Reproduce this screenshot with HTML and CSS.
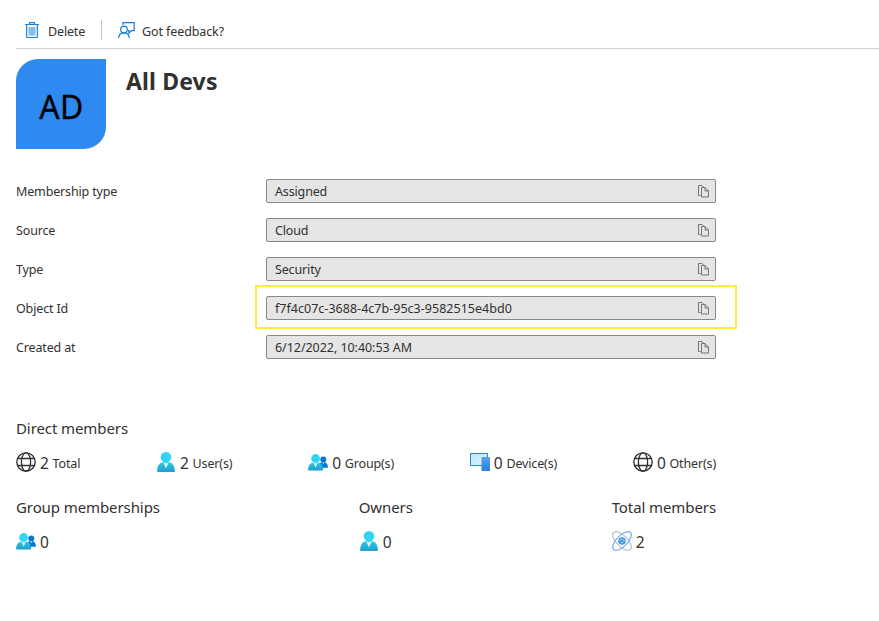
FILE: index.html
```html
<!DOCTYPE html>
<html lang="en">
<head>
<meta charset="utf-8">
<title>All Devs</title>
<link rel="stylesheet" href="styles.css">
</head>
<body>
<svg class="defs" width="0" height="0" aria-hidden="true">
  <defs>
    <linearGradient id="person-fill" x1="0" y1="0" x2="0" y2="1"><stop offset="0" stop-color="#2cc8eb"/><stop offset="1" stop-color="#1f9fc8"/></linearGradient>
    <linearGradient id="screen-fill" x1="0" y1="0" x2="1" y2="1"><stop offset="0" stop-color="#c3e5f8"/><stop offset="1" stop-color="#d8f3fc"/></linearGradient>
    <linearGradient id="phone-fill" x1="0" y1="0" x2="0" y2="1"><stop offset="0" stop-color="#5ea0ef"/><stop offset="1" stop-color="#2380dc"/></linearGradient>
    <symbol id="copy" viewBox="0 0 12 13">
      <path d="M3.5 10.5H1.500V.5H5L6.500 2M4.500 2.500H8L11.500 6V12H4.500ZM8 2.500V6H11.500" fill="none" stroke="#68676a" stroke-width=".9"/>
    </symbol>
    <symbol id="globe" viewBox="0 0 20 20">
      <g fill="none" stroke="#323130" stroke-width="1.35"><circle cx="10" cy="10" r="9.2"/><ellipse cx="10" cy="10" rx="4.6" ry="9.2"/><path d="M1.5 6.5H18.5M1.5 13.5H18.5"/></g>
    </symbol>
    <symbol id="person" viewBox="-1 0 20 20">
      <path d="M1.2 20Q0 20 0 18.8C.6 13.800 2.500 10.300 6.200 10.300H11.800C15.500 10.300 17.400 13.800 18 18.800Q18 20 16.800 20Z" fill="url(#person-fill)"/>
      <path d="M6.200 10.300L9 16.600L11.800 10.300Q9 12 6.200 10.300Z" fill="#fff" opacity=".85"/>
      <circle cx="9" cy="5.300" r="5.300" fill="#32d4f5"/>
    </symbol>
    <symbol id="group" viewBox="0 0 20 17">
      <circle cx="15.300" cy="5.500" r="3" fill="#0078d4"/>
      <path d="M11 13.700V10Q12 8.300 14 8.300H16.800Q19.300 8.800 20 12.900Q20 13.700 19.200 13.700Z" fill="#0078d4"/>
      <path d="M14.500 8.400L15.300 10.300L16.200 8.400Z" fill="#fff"/>
      <path d="M1 16.500Q0 16.500 0 15.500C.5 11.400 2.200 8.700 5.300 8.700H9.900C13 8.700 14.700 11.400 15.200 15.500Q15.200 16.500 14.200 16.500Z" fill="url(#person-fill)"/>
      <path d="M5.400 8.700L7.600 13.800L9.800 8.700Q7.600 10 5.400 8.700Z" fill="#fff" opacity=".85"/>
      <circle cx="7.600" cy="4.500" r="4.400" fill="#32d4f5"/>
    </symbol>
  </defs>
</svg>

<header class="toolbar">
  <div class="command delete">
    <svg width="14" height="17" viewBox="0 0 14 17"><path d="M3.500 5H10.500V13.500H3.500Z" fill="#83bdec"/><path d="M0 2.500H14M4.500 2.500V.6H9.500V2.500M1.700 2.500V15.500H12.300V2.500" fill="none" stroke="#1683d8" stroke-width="1.200"/></svg>
    <span>Delete</span>
  </div>
  <div class="command feedback">
    <svg width="17" height="17" viewBox="0 0 17 17"><g fill="none" stroke="#0f7fd7" stroke-width="1.200"><circle cx="6" cy="7.500" r="3.300"/><path d="M.6 16C.7 12.700 3 10.900 6 10.900S11 12.700 11.300 16M5 3V.7H16.200V8.700H13.500L11 11.200V8.700H10"/></g></svg>
    <span>Got feedback?</span>
  </div>
</header>

<main>
  <section class="identity">
    <div class="avatar"><span>AD</span></div>
    <h1>All Devs</h1>
  </section>

  <section class="properties">
    <div class="property"><span class="label">Membership type</span><div class="field"><span>Assigned</span><svg width="12" height="13"><use href="#copy"/></svg></div></div>
    <div class="property"><span class="label">Source</span><div class="field"><span>Cloud</span><svg width="12" height="13"><use href="#copy"/></svg></div></div>
    <div class="property"><span class="label">Type</span><div class="field"><span>Security</span><svg width="12" height="13"><use href="#copy"/></svg></div></div>
    <div class="property"><span class="label">Object Id</span><div class="field highlighted"><span class="numeric">f7f4c07c-3688-4c7b-95c3-9582515e4bd0</span><svg width="12" height="13"><use href="#copy"/></svg></div></div>
    <div class="property"><span class="label">Created at</span><div class="field"><span class="date">6/12/2022, 10:40:53 AM</span><svg width="12" height="13"><use href="#copy"/></svg></div></div>
  </section>

  <section class="members">
    <h2>Direct members</h2>
    <div class="stats">
      <div class="stat"><svg width="20" height="20"><use href="#globe"/></svg><b>2</b><span>Total</span></div>
      <div class="stat"><svg width="20" height="20"><use href="#person"/></svg><b>2</b><span>User(s)</span></div>
      <div class="stat"><svg width="20" height="17"><use href="#group"/></svg><b>0</b><span>Group(s)</span></div>
      <div class="stat"><svg width="20" height="18" viewBox="0 0 20 18"><path d="M.5.5H17.500V12.500H.5Z" fill="url(#screen-fill)" stroke="#2387cf"/><rect x="11.500" y="4" width="8.500" height="14" rx=".6" fill="url(#phone-fill)"/><circle cx="15.700" cy="16.300" r=".5" fill="#75b6f5"/></svg><b>0</b><span>Device(s)</span></div>
      <div class="stat"><svg width="20" height="20"><use href="#globe"/></svg><b>0</b><span>Other(s)</span></div>
    </div>
  </section>

  <section class="summary">
    <div class="card"><h2>Group memberships</h2><div class="stat"><svg width="20" height="17"><use href="#group"/></svg><b>0</b></div></div>
    <div class="card"><h2>Owners</h2><div class="stat"><svg width="20" height="20"><use href="#person"/></svg><b>0</b></div></div>
    <div class="card"><h2>Total members</h2><div class="stat"><svg width="20" height="20" viewBox="0 0 20 20"><g fill="none" stroke-width="1.100"><ellipse cx="10" cy="10" rx="12" ry="5.400" transform="rotate(45 10 10)" stroke="#b9bcc0"/><ellipse cx="10" cy="10" rx="12" ry="5.400" transform="rotate(-45 10 10)" stroke="#69aff2"/></g><circle cx="10" cy="10" r="3.800" fill="#3f94e4"/><path d="M7.500 9L10 8L12.500 10L10 12.200L8.500 11" fill="none" stroke="#d7ebfb" stroke-width=".7"/></svg><b>2</b></div></div>
  </section>
</main>
</body>
</html>
```
FILE: styles.css
```css
* { box-sizing: border-box; }

body {
  margin: 0;
  height: 621px;
  overflow: hidden;
  background: #fff;
  color: #323130;
  font: 12.5px/18px "Noto Sans", sans-serif;
  letter-spacing: -0.15px;
}

svg { display: block; flex: none; overflow: visible; }
.defs { position: absolute; }
h1, h2 { margin: 0; }
span, b, h1, h2 { white-space: nowrap; }

.toolbar {
  display: flex;
  height: 49px;
  margin-left: 16px;
  padding: 20px 0 0;
  border-bottom: 1px solid #d2d0ce;
}

.command { display: flex; height: 20px; align-items: center; }
.command svg { margin-top: 1px; }
.command span { padding-top: 3px; }
.delete { width: 86px; padding-left: 9px; gap: 9px; border-right: 1px solid #c8c6c4; }
.feedback { padding-left: 16px; gap: 7px; letter-spacing: -0.1px; }

.identity { display: flex; padding: 10px 16px 0; gap: 20px; }

.avatar {
  display: flex;
  width: 90px;
  height: 90px;
  align-items: center;
  justify-content: center;
  border-radius: 22px 0;
  background: #2e89f1;
  color: #000;
  font-size: 32px;
  line-height: 40px;
  letter-spacing: 0.4px;
  -webkit-text-stroke: 0.3px #000;
}

.avatar span { padding: 5px 0 0 1px; }
h1 { padding-top: 6px; font-size: 23px; line-height: 32px; font-weight: 700; letter-spacing: 0.15px; }

.properties { display: grid; gap: 15px; padding: 30px 16px 0; }
.property { display: grid; grid-template-columns: 250px 450px; height: 24px; align-items: center; }
.property span { padding-top: 2px; }
.numeric { letter-spacing: 0.02px; }
.date { letter-spacing: -0.05px; }

.field {
  position: relative;
  display: flex;
  height: 24px;
  align-items: center;
  justify-content: space-between;
  padding: 0 6px 0 8px;
  border: 1px solid #8a8886;
  border-radius: 2px;
  background: #e5e5e5;
}

.highlighted::after {
  content: "";
  position: absolute;
  inset: -12px -22px -10px -12px;
  border: 2px solid #ffeb3b;
}

.members { padding: 58px 0 0 16px; }
h2 { font-size: 15px; line-height: 22px; font-weight: 400; letter-spacing: -0.09px; }

.stats { display: flex; width: 700px; justify-content: space-between; margin-top: 12px; }
.stat { display: flex; height: 22px; align-items: center; }
.stat b { margin-left: 4px; font-size: 15.5px; font-weight: 400; padding-top: 2px; letter-spacing: -0.3px; }
.stat span { margin-left: 4px; padding-top: 4px; letter-spacing: -0.15px; }

.summary { display: flex; width: 700px; justify-content: space-between; margin: 23px 0 0 16px; }
.card .stat { margin-top: 12px; }
.card .stat b { padding-top: 1px; }
```
